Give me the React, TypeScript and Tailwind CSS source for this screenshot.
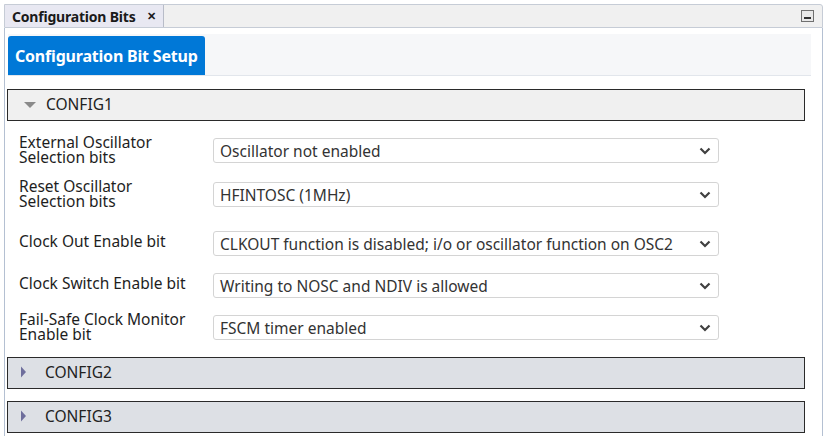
import React from 'react';

const font = { fontFamily: '"Noto Sans", "Open Sans", sans-serif' };

const rows = [
  { label: ['External Oscillator', 'Selection bits'], value: 'Oscillator not enabled', mt: 'mt-[17px]' },
  { label: ['Reset Oscillator', 'Selection bits'], value: 'HFINTOSC (1MHz)', mt: 'mt-[19px]' },
  { label: ['Clock Out Enable bit'], value: 'CLKOUT function is disabled; i/o or oscillator function on OSC2', mt: 'mt-[24px]' },
  { label: ['Clock Switch Enable bit'], value: 'Writing to NOSC and NDIV is allowed', mt: 'mt-[17px]' },
  { label: ['Fail-Safe Clock Monitor', 'Enable bit'], value: 'FSCM timer enabled', mt: 'mt-[17px]' },
];

const Chevron = () => (
  <svg width="12" height="8" viewBox="0 0 12 8" className="shrink-0">
    <path d="M1.5 1.5 L6 6 L10.5 1.5" fill="none" stroke="#404040" strokeWidth="2.2" />
  </svg>
);

const Section = ({ name, open }: { name: string; open?: boolean }) => (
  <div
    className={`flex items-center h-[32px] border border-[#2a2a2a] ${open ? 'bg-[#f0f0f0]' : 'bg-[#dde0e5]'}`}
  >
    {open ? (
      <svg width="14" height="8" viewBox="0 0 14 8" className="ml-[15px] mr-[9px]">
        <path d="M1 1 L13 1 L7 7 Z" fill="#8a8a8a" />
      </svg>
    ) : (
      <svg width="8" height="12" viewBox="0 0 8 12" className="ml-[12px] mr-[17px] mb-[3px]">
        <path d="M1 0.5 L6 6 L1 11.5 Z" fill="#6e6e9c" />
      </svg>
    )}
    <span className="text-[15.5px] text-[#222]">{name}</span>
  </div>
);

export default function App() {
  return (
    <div className="w-[825px] h-[436px] bg-white overflow-hidden pt-[4px] pl-[4px] pr-[2px]" style={font}>
      {/* window header */}
      <div className="flex items-stretch h-[24px] bg-[#f0f0f0] border border-[#c6ccd6] rounded-tr-[3px]">
        <div className="flex items-center gap-[11px] pl-[7px] pr-[8px] bg-[#e8e8f2] border-r border-[#b8bcc8] text-[14px] font-bold text-[#1a1a1a] tracking-[-0.2px]">
          <span>Configuration Bits</span>
          <span className="text-[11px] font-bold">✕</span>
        </div>
        <div className="flex-1" />
        <div className="flex items-center pr-[8px]">
          <div className="w-[13px] h-[12px] border border-[#707070] bg-[#e8e8e8] flex items-end justify-center pb-[2px]">
            <div className="w-[7px] h-[2px] bg-[#303030]" />
          </div>
        </div>
      </div>
      {/* panel */}
      <div className="h-[410px] border-l border-r border-[#b4c0d2] pt-[6px] pl-[3px] pr-[11px]">
        <div className="flex h-[42px] bg-[#f6f7f9] border-b border-[#e2e6ec] pt-[2px]">
          <div className="flex items-center px-[7px] bg-[#0078d7] rounded-t-[3px] text-white font-bold text-[16px] tracking-[-0.2px]">
            Configuration Bit Setup
          </div>
        </div>
        <div className="mt-[13px] pr-[6px] ml-[-1px]">
          <Section name="CONFIG1" open />
          <div className="pl-[12px]">
            {rows.map((r) => (
              <div key={r.value} className={`flex items-center h-[25px] ${r.mt}`}>
                <div
                  className={`w-[194px] text-[15.5px] leading-[15px] text-[#1e1e1e] ${
                    r.label.length === 1 ? 'mt-[-5px]' : 'mt-[-2px]'
                  }`}
                >
                  {r.label.map((l) => (
                    <div key={l}>{l}</div>
                  ))}
                </div>
                <div className="w-[506px] h-[25px] flex items-center justify-between border border-[#d4d4d4] rounded-[3px] pl-[6px] pr-[7px] bg-white">
                  <span className="text-[15.5px] text-[#333] leading-[20px]">{r.value}</span>
                  <Chevron />
                </div>
              </div>
            ))}
          </div>
          <div className="mt-[17px]">
            <Section name="CONFIG2" />
          </div>
          <div className="mt-[12px]">
            <Section name="CONFIG3" />
          </div>
        </div>
      </div>
    </div>
  );
}
